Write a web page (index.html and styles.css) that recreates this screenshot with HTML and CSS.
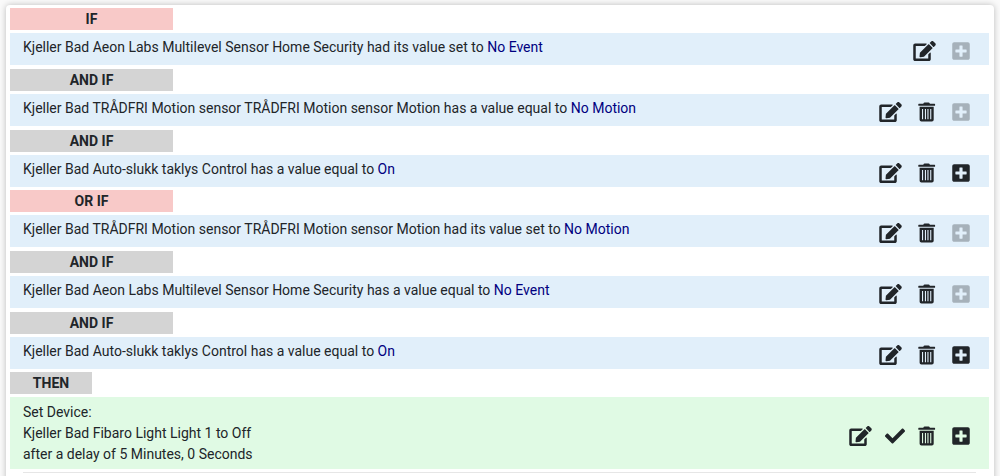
FILE: index.html
```
<!DOCTYPE html>
<html lang="en">
<head>
<meta charset="utf-8">
<title>Rule</title>
<link rel="stylesheet" href="styles.css">
</head>
<body>
<svg class="sprite" aria-hidden="true">
  <symbol id="edit" viewBox="0 0 576 512"><path d="M402.6 83.2l90.2 90.2c3.8 3.8 3.8 10 0 13.8L274.4 405.6l-92.8 10.3c-12.4 1.4-22.9-9.1-21.5-21.5l10.3-92.8L388.8 83.2c3.8-3.8 10-3.8 13.8 0zm162-22.9l-48.8-48.8c-15.2-15.2-39.9-15.2-55.2 0l-35.4 35.4c-3.8 3.8-3.8 10 0 13.8l90.2 90.2c3.8 3.8 10 3.8 13.8 0l35.4-35.4c15.2-15.3 15.2-40 0-55.2zM384 346.2V448H64V128h229.8c3.2 0 6.2-1.3 8.5-3.5l40-40c7.6-7.6 2.2-20.5-8.5-20.5H48C21.5 64 0 85.5 0 112v352c0 26.5 21.5 48 48 48h352c26.5 0 48-21.5 48-48V306.2c0-10.7-12.9-16-20.5-8.5l-40 40c-2.2 2.3-3.5 5.3-3.5 8.5z"/></symbol>
  <symbol id="trash" viewBox="0 0 18 20"><path fill-rule="evenodd" d="M5.4 1.4Q5.8.6 6.6.6h4q.8 0 1.2.8l.2.4h4.6q.5 0 .5.5v1q0 .5-.5.5H.8q-.5 0-.5-.5v-1q0-.5.5-.5h4.4zM1.6 4.8h14.1v12.9q0 1.8-1.8 1.8H3.4q-1.8 0-1.8-1.8zM4 7v10.2h1.1V7zM6.9 7v10.2H8V7zM9.4 7v10.2h1.1V7zM12.2 7v10.2h1.1V7z"/></symbol>
  <symbol id="plus" viewBox="0 0 448 512"><path d="M400 32H48C21.5 32 0 53.5 0 80v352c0 26.5 21.5 48 48 48h352c26.5 0 48-21.5 48-48V80c0-26.5-21.5-48-48-48zm-32 252c0 6.6-5.4 12-12 12h-92v92c0 6.6-5.4 12-12 12h-56c-6.6 0-12-5.4-12-12v-92H92c-6.6 0-12-5.4-12-12v-56c0-6.6 5.4-12 12-12h92v-92c0-6.6 5.4-12 12-12h56c6.6 0 12 5.4 12 12v92h92c6.6 0 12 5.4 12 12v56z"/></symbol>
  <symbol id="check" viewBox="0 0 512 512"><path d="M173.898 439.404l-166.4-166.4c-9.997-9.997-9.997-26.206 0-36.204l36.203-36.204c9.997-9.998 26.207-9.998 36.204 0L192 312.69 432.095 72.596c9.997-9.997 26.207-9.997 36.204 0l36.203 36.204c9.997 9.997 9.997 26.206 0 36.204l-294.4 294.401c-9.998 9.997-26.207 9.997-36.204-.001z"/></symbol>
</svg>
<main class="panel">
  <section class="group">
    <div class="rule">
      <h2 class="tag tag-start">IF</h2>
      <div class="bar">
        <p class="text">Kjeller Bad Aeon Labs Multilevel Sensor Home Security had its value set to <span class="value">No Event</span></p>
        <div class="actions">
          <button class="action" aria-label="Edit"><svg class="icon icon-wide"><use href="#edit"/></svg></button>
          <button class="action" aria-label="Add" disabled><svg class="icon"><use href="#plus"/></svg></button>
        </div>
      </div>
    </div>
    <div class="rule">
      <h2 class="tag">AND IF</h2>
      <div class="bar">
        <p class="text">Kjeller Bad TRÅDFRI Motion sensor TRÅDFRI Motion sensor Motion has a value equal to <span class="value">No Motion</span></p>
        <div class="actions">
          <button class="action" aria-label="Edit"><svg class="icon icon-wide"><use href="#edit"/></svg></button>
          <button class="action" aria-label="Delete"><svg class="icon"><use href="#trash"/></svg></button>
          <button class="action" aria-label="Add" disabled><svg class="icon"><use href="#plus"/></svg></button>
        </div>
      </div>
    </div>
    <div class="rule">
      <h2 class="tag">AND IF</h2>
      <div class="bar">
        <p class="text">Kjeller Bad Auto-slukk taklys Control has a value equal to <span class="value">On</span></p>
        <div class="actions">
          <button class="action" aria-label="Edit"><svg class="icon icon-wide"><use href="#edit"/></svg></button>
          <button class="action" aria-label="Delete"><svg class="icon"><use href="#trash"/></svg></button>
          <button class="action" aria-label="Add"><svg class="icon"><use href="#plus"/></svg></button>
        </div>
      </div>
    </div>
  </section>
  <section class="group">
    <div class="rule">
      <h2 class="tag tag-start">OR IF</h2>
      <div class="bar">
        <p class="text">Kjeller Bad TRÅDFRI Motion sensor TRÅDFRI Motion sensor Motion had its value set to <span class="value">No Motion</span></p>
        <div class="actions">
          <button class="action" aria-label="Edit"><svg class="icon icon-wide"><use href="#edit"/></svg></button>
          <button class="action" aria-label="Delete"><svg class="icon"><use href="#trash"/></svg></button>
          <button class="action" aria-label="Add" disabled><svg class="icon"><use href="#plus"/></svg></button>
        </div>
      </div>
    </div>
    <div class="rule">
      <h2 class="tag">AND IF</h2>
      <div class="bar">
        <p class="text">Kjeller Bad Aeon Labs Multilevel Sensor Home Security has a value equal to <span class="value">No Event</span></p>
        <div class="actions">
          <button class="action" aria-label="Edit"><svg class="icon icon-wide"><use href="#edit"/></svg></button>
          <button class="action" aria-label="Delete"><svg class="icon"><use href="#trash"/></svg></button>
          <button class="action" aria-label="Add" disabled><svg class="icon"><use href="#plus"/></svg></button>
        </div>
      </div>
    </div>
    <div class="rule">
      <h2 class="tag">AND IF</h2>
      <div class="bar">
        <p class="text">Kjeller Bad Auto-slukk taklys Control has a value equal to <span class="value">On</span></p>
        <div class="actions">
          <button class="action" aria-label="Edit"><svg class="icon icon-wide"><use href="#edit"/></svg></button>
          <button class="action" aria-label="Delete"><svg class="icon"><use href="#trash"/></svg></button>
          <button class="action" aria-label="Add"><svg class="icon"><use href="#plus"/></svg></button>
        </div>
      </div>
    </div>
  </section>
  <section class="group">
    <div class="rule">
      <h2 class="tag tag-then">THEN</h2>
      <div class="bar bar-then">
        <p class="text">Set Device:<br>Kjeller Bad Fibaro Light Light 1 to Off<br>after a delay of 5 Minutes, 0 Seconds</p>
        <div class="actions">
          <button class="action" aria-label="Edit"><svg class="icon icon-wide"><use href="#edit"/></svg></button>
          <button class="action action-check" aria-label="Test"><svg class="icon icon-check"><use href="#check"/></svg></button>
          <button class="action" aria-label="Delete"><svg class="icon"><use href="#trash"/></svg></button>
          <button class="action" aria-label="Add"><svg class="icon"><use href="#plus"/></svg></button>
        </div>
      </div>
    </div>
  </section>
  <hr class="divider">
</main>
</body>
</html>
```
FILE: styles.css
```
* {
  box-sizing: border-box;
}

body {
  margin: 0;
  padding: 5px 6px 0;
  background: #fafafa;
  color: #212529;
  font: 14px/21px Roboto, "Liberation Sans", sans-serif;
  overflow: hidden;
}

.sprite {
  display: none;
}

.panel {
  min-height: calc(100vh + 12px);
  padding: 3px 5px 24px 4px;
  border-radius: 4px;
  background: #fff;
  box-shadow: 0 0 6px rgba(0, 0, 0, 0.25);
}

.group {
  display: grid;
  gap: 4px;
  margin-bottom: 3px;
}

.rule {
  display: grid;
  gap: 3px;
}

.tag {
  width: 163px;
  margin: 0;
  background: #d4d4d4;
  font-size: 14px;
  font-weight: 700;
  line-height: 22px;
  text-align: center;
}

.tag-start {
  background: #f8c9c8;
}

.tag-then {
  width: 82px;
}

.bar {
  display: flex;
  justify-content: space-between;
  align-items: flex-end;
  padding: 4px 19px 4px 13px;
  background: #e1effa;
}

.text {
  margin: 0;
  padding-bottom: 3px;
}

.value {
  color: #000080;
}

.actions {
  display: flex;
  gap: 16px;
}

.bar-then {
  align-items: center;
  padding-top: 5px;
  background: #e0fae4;
}

.bar-then .text {
  padding-bottom: 0;
}

.bar-then .actions {
  padding-top: 5px;
}

.action {
  display: flex;
  padding: 0;
  border: 0;
  background: none;
  color: inherit;
  cursor: pointer;
}

.action:disabled {
  opacity: 0.3;
  cursor: default;
}

.action-check {
  margin: 0 -3px;
}

.icon {
  width: 18px;
  height: 20px;
  fill: currentColor;
}

.icon-wide {
  width: 23px;
}

.icon-check {
  width: 20px;
}

.divider {
  height: 1px;
  margin: 0 13px;
  border: 0;
  background: #e6e6e6;
}
```
